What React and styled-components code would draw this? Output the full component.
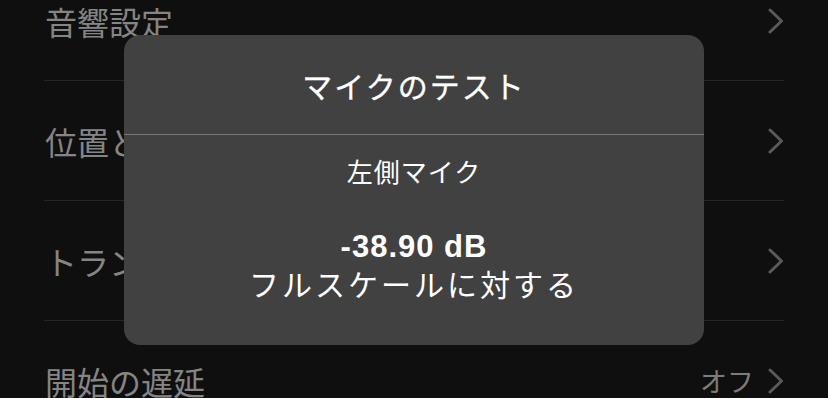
import React from 'react'
import styled, { createGlobalStyle } from 'styled-components'

const GlobalStyle = createGlobalStyle`
html, body {
  margin: 0;
  padding: 0;
  background: #0f0f0f;
  height: 100%;
  overflow: hidden;
}
body {
  font-family: "Noto Sans CJK JP", "Noto Sans", sans-serif;
}
`
const Screen = styled.div`
position: relative;
width: 828px;
height: 398px;
overflow: hidden;
background: #0f0f0f;
`
const List = styled.ul`
list-style: none;
margin: -39px 44px 0 44px;
padding: 0;
`
const Row = styled.li`
display: flex;
align-items: center;
justify-content: space-between;
height: 119px;
border-bottom: 1px solid #262626;
`
const Label = styled.span`
font-size: 32px;
color: #858585;
padding-left: 1px;
`
const Trail = styled.span`
display: flex;
align-items: center;
gap: 14px;
`
const Value = styled.span`
font-size: 27px;
color: #7c7c7c;
`
const Dialog = styled.div`
position: absolute;
top: 35px;
left: 124px;
width: 580px;
height: 310px;
border-radius: 16px;
background: #414141;
color: #fff;
display: flex;
flex-direction: column;
text-align: center;
`
const Header = styled.div`
height: 99px;
display: flex;
align-items: center;
justify-content: center;
border-bottom: 1px solid #777;
font-size: 30px;
font-weight: 400;
-webkit-text-stroke: 0.3px #fff;
letter-spacing: 2px;
`
const Body = styled.div`
display: flex;
flex-direction: column;
align-items: center;
padding-top: 18px;
`
const Sub = styled.div`
font-size: 26px;
line-height: 36px;
letter-spacing: 1px;
margin-bottom: 39px;
`
const Level = styled.div`
font-family: "Liberation Sans", Arial, sans-serif;
font-weight: bold;
font-size: 31px;
line-height: 37px;
letter-spacing: 1px;
`
const Caption = styled.div`
font-size: 30px;
line-height: 37px;
letter-spacing: 3px;
`

const Chevron = () => (
  <svg width='16' height='26' viewBox='0 0 16 26'>
    <polyline points='2,2 13.5,13 2,24' fill='none' stroke='#5a5a5a' strokeWidth='3' strokeLinecap='round' strokeLinejoin='round' />
  </svg>
)

const rows = [
  { label: '音響設定' },
  { label: '位置と方向' },
  { label: 'トランスクリプト' },
  { label: '開始の遅延', value: 'オフ' }
]

export default () => (
  <Screen>
    <GlobalStyle />
    <List>
      {rows.map(r => (
        <Row key={r.label}>
          <Label>{r.label}</Label>
          <Trail>
            {r.value && <Value>{r.value}</Value>}
            <Chevron />
          </Trail>
        </Row>
      ))}
    </List>
    <Dialog>
      <Header>マイクのテスト</Header>
      <Body>
        <Sub>左側マイク</Sub>
        <Level>-38.90 dB</Level>
        <Caption>フルスケールに対する</Caption>
      </Body>
    </Dialog>
  </Screen>
)
